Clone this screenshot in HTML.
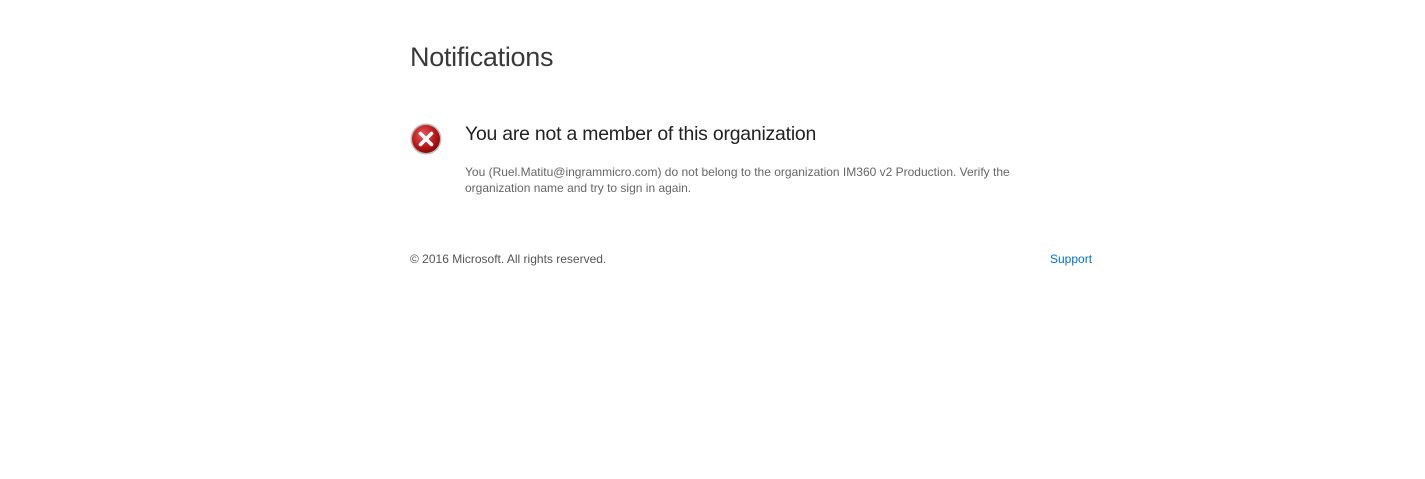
<!DOCTYPE html>
<html><head><meta charset="utf-8"><style>
html,body{margin:0;padding:0;background:#fff;width:1425px;height:479px;overflow:hidden;font-family:"Liberation Sans",sans-serif}
.t{position:absolute;left:410px;top:42px;font-size:27px;color:#3a3a3a;letter-spacing:-0.3px;white-space:nowrap}
.h{position:absolute;left:465px;top:123px;font-size:19.4px;color:#222;white-space:nowrap;letter-spacing:-0.2px}
.b{position:absolute;left:465px;top:164px;font-size:12px;line-height:16px;color:#666;width:590px}
.f{position:absolute;left:410px;top:252px;font-size:12px;color:#555}
.s{position:absolute;left:1050px;top:252px;font-size:12px;color:#0072c6}
.i{position:absolute;left:410px;top:123px}
</style></head><body>
<div class="t">Notifications</div>
<svg class="i" width="32" height="32" viewBox="0 0 32 32">
<defs><radialGradient id="g" cx="40%" cy="35%" r="65%"><stop offset="0" stop-color="#e85a5a"/><stop offset="0.7" stop-color="#b81414"/><stop offset="1" stop-color="#8a0a0a"/></radialGradient></defs>
<circle cx="16" cy="16" r="15.5" fill="#bbb"/>
<circle cx="16" cy="16" r="14" fill="url(#g)"/>
<path d="M10.5 10.5L21.5 21.5M21.5 10.5L10.5 21.5" stroke="#fff" stroke-width="3.6" stroke-linecap="round"/>
</svg>
<div class="h">You are not a member of this organization</div>
<div class="b">You (Ruel.Matitu@ingrammicro.com) do not belong to the organization IM360 v2 Production. Verify the organization name and try to sign in again.</div>
<div class="f">© 2016 Microsoft. All rights reserved.</div>
<div class="s">Support</div>
</body></html>
